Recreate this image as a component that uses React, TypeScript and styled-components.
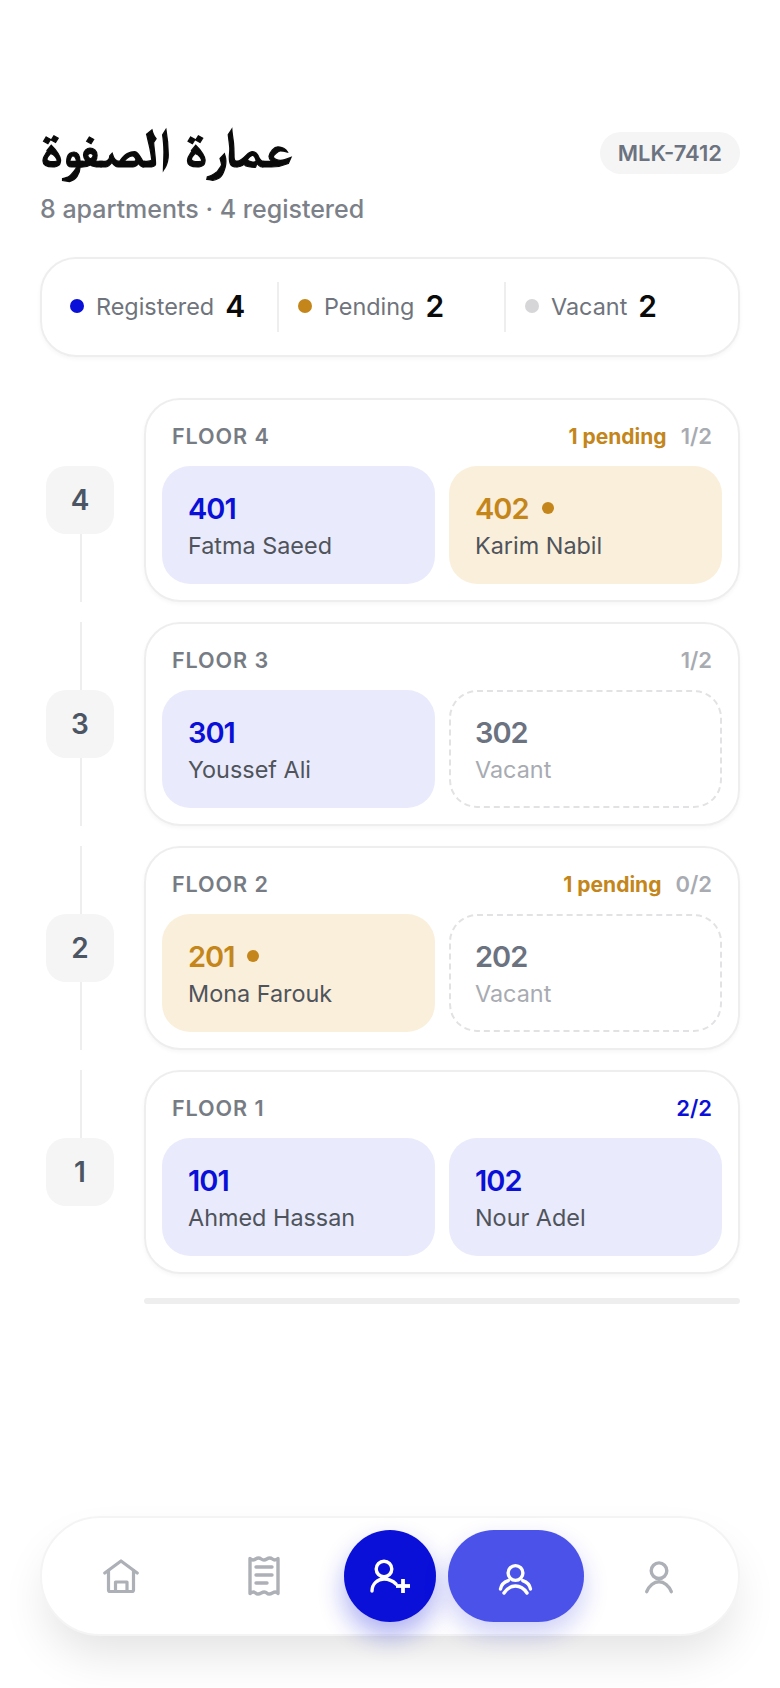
import React from "react";
import styled, { createGlobalStyle } from "styled-components";

const BLUE = "#0a10d8";
const AMBER = "#c4861a";

const GlobalStyle = createGlobalStyle`
	html, body {
		margin: 0;
		padding: 0;
		background: #fff;
		font-family: Inter, "Noto Sans", sans-serif;
	}
`;

const PAGE = styled.div`
	position: relative;
	box-sizing: border-box;
	width: 780px;
	height: 1688px;
	padding: 122px 40px 0;
	overflow: hidden;
`;

const HEADER = styled.div`
	display: flex;
	justify-content: space-between;
	align-items: flex-start;
	height: 72px;
`;

const TITLE = styled.h1`
	margin: 1px 0 0;
	font-family: FreeSerif, "Noto Naskh Arabic", serif;
	font-size: 54px;
	line-height: 56px;
	font-weight: 700;
	color: #0a0a0a;
	-webkit-text-stroke: 1.2px #0a0a0a;
`;

const CHIP = styled.span`
	margin-top: 10px;
	height: 42px;
	padding: 0 18px;
	border-radius: 21px;
	background: #f5f5f6;
	color: #6b7280;
	font-size: 22px;
	font-weight: 600;
	line-height: 42px;
`;

const SUBTITLE = styled.p`
	margin: 0;
	font-size: 25px;
	font-weight: 500;
	line-height: 30px;
	color: #7c8189;
`;

const STATS = styled.div`
	display: grid;
	grid-template-columns: 235px 227px 1fr;
	align-items: center;
	box-sizing: border-box;
	height: 100px;
	margin-top: 33px;
	border: 2px solid #eeeeee;
	border-radius: 36px;
	box-shadow: 0 2px 4px rgba(0, 0, 0, 0.04);
`;

const STAT = styled.div<{ $first?: boolean }>`
	display: flex;
	align-items: center;
	box-sizing: border-box;
	height: 50px;
	padding-bottom: 2px;
	padding-left: ${(props) => (props.$first ? "28px" : "19px")};
	border-left: ${(props) => (props.$first ? "none" : "2px solid #eeeeee")};
`;

const DOT = styled.span<{ $color: string }>`
	width: 14px;
	height: 14px;
	border-radius: 50%;
	background: ${(props) => props.$color};
`;

const STAT_LABEL = styled.span`
	margin-left: 12px;
	font-size: 23.4px;
	color: #6f747c;
`;

const STAT_VALUE = styled.span`
	margin-left: 11px;
	font-size: 30px;
	font-weight: 600;
	line-height: 30px;
	color: #0a0a0a;
`;

const FLOORS = styled.div`
	display: flex;
	flex-direction: column;
	gap: 20px;
	margin-top: 41px;
`;

const ROW = styled.div`
	display: grid;
	grid-template-columns: 80px 1fr;
	column-gap: 24px;
`;

const RAIL = styled.div`
	display: flex;
	flex-direction: column;
	align-items: center;
`;

const LINE = styled.div<{ $hidden?: boolean }>`
	flex: 1;
	width: 2px;
	margin-left: 2px;
	background: ${(props) => (props.$hidden ? "transparent" : "#eeeeee")};
`;

const BADGE = styled.div`
	display: flex;
	align-items: center;
	justify-content: center;
	width: 68px;
	height: 68px;
	border-radius: 20px;
	background: #f5f5f6;
	color: #4b5563;
	font-size: 28px;
	font-weight: 600;
`;

const CARD = styled.div`
	box-sizing: border-box;
	height: 204px;
	padding: 16px;
	border: 2px solid #eeeeee;
	border-radius: 36px;
	box-shadow: 0 2px 4px rgba(0, 0, 0, 0.04);
`;

const CARD_HEAD = styled.div`
	display: flex;
	align-items: center;
	height: 40px;
	padding: 0 10px;
	margin-bottom: 10px;
`;

const FLOOR_NAME = styled.span`
	flex: 1;
	font-size: 21.6px;
	font-weight: 600;
	letter-spacing: 0.9px;
	color: #777c84;
`;

const PENDING = styled.span`
	margin-right: 14px;
	font-size: 21px;
	font-weight: 700;
	color: ${AMBER};
`;

const COUNT = styled.span<{ $full?: boolean }>`
	font-size: 22px;
	font-weight: 600;
	color: ${(props) => (props.$full ? BLUE : "#a8abb2")};
`;

const CELLS = styled.div`
	display: grid;
	grid-template-columns: 1fr 1fr;
	gap: 14px;
`;

type CellState = "registered" | "pending" | "vacant";

const CELL = styled.div<{ $state: CellState }>`
	box-sizing: border-box;
	height: 118px;
	padding: ${(props) => (props.$state === "vacant" ? "20px 24px" : "22px 26px")};
	border-radius: 28px;
	background: ${(props) =>
		props.$state === "registered"
			? "#e9eafb"
			: props.$state === "pending"
				? "#faefdb"
				: "transparent"};
	border: ${(props) => (props.$state === "vacant" ? "2px dashed #e2e2e4" : "none")};
`;

const CELL_NUMBER = styled.div<{ $state: CellState }>`
	display: flex;
	align-items: center;
	gap: 13px;
	height: 40px;
	font-size: 29px;
	font-weight: 600;
	letter-spacing: -1px;
	color: ${(props) =>
		props.$state === "registered"
			? BLUE
			: props.$state === "pending"
				? AMBER
				: "#6b7280"};
`;

const PENDING_DOT = styled.span`
	width: 12px;
	height: 12px;
	border-radius: 50%;
	background: ${AMBER};
`;

const CELL_NAME = styled.div<{ $vacant?: boolean }>`
	margin-top: 4px;
	font-size: 23.4px;
	line-height: 28px;
	color: ${(props) => (props.$vacant ? "#a8abb2" : "#4f545c")};
`;

const SCROLLBAR = styled.div`
	height: 6px;
	margin: 24px 0 0 104px;
	border-radius: 3px;
	background: #eeeeee;
`;

const NAV = styled.nav`
	position: absolute;
	left: 40px;
	top: 1516px;
	display: flex;
	align-items: center;
	gap: 12px;
	box-sizing: border-box;
	width: 700px;
	height: 120px;
	padding: 0 16px;
	border: 2px solid #f4f4f4;
	border-radius: 60px;
	background: #fff;
	box-shadow: 0 24px 48px -8px rgba(0, 0, 0, 0.12);
`;

const NAV_ITEM = styled.div<{ $width: number }>`
	display: flex;
	align-items: center;
	justify-content: center;
	width: ${(props) => props.$width}px;
	height: 92px;
`;

const FAB = styled.div`
	display: flex;
	align-items: center;
	justify-content: center;
	width: 92px;
	height: 92px;
	border-radius: 50%;
	background: ${BLUE};
	box-shadow: 0 14px 26px rgba(10, 16, 216, 0.32);
`;

const ACTIVE = styled.div`
	display: flex;
	align-items: center;
	justify-content: center;
	width: 136px;
	height: 92px;
	border-radius: 46px;
	background: #4b52ea;
	box-shadow: 0 12px 26px rgba(10, 16, 216, 0.2);
`;

const HomeIcon = () => (
	<svg width="36" height="36" viewBox="0 0 36 36" fill="none" stroke="#adb0b6" strokeWidth="3.2" strokeLinecap="round" strokeLinejoin="round">
		<path d="M1.800 15 18 3 34.200 15" />
		<path d="M5.500 12.500V32a1.500 1.500 0 0 0 1.500 1.500h22a1.500 1.500 0 0 0 1.500-1.500V12.500" />
		<path d="M12.500 33.500V24h11.500v9.500" />
	</svg>
);

const ReceiptIcon = () => (
	<svg width="34" height="40" viewBox="0 0 34 40" fill="none" stroke="#adb0b6" strokeWidth="3.4" strokeLinecap="round" strokeLinejoin="round">
		<path d="M3 2.500v35q3.500-2.500 5.600-.5t5.600 0 5.600 0 5.600 0 5.600.5v-35q-3 2.500-5.600.5t-5.600 0-5.600 0-5.600 0-5.600-.5Z" />
		<path d="M9 11h16" />
		<path d="M9 19h16" />
		<path d="M9 27h11" />
	</svg>
);

const AddUserIcon = () => (
	<svg width="40" height="40" viewBox="0 0 40 40" fill="none" stroke="#fff" strokeWidth="3.4" strokeLinecap="round" strokeLinejoin="round">
		<circle cx="14" cy="13" r="7.800" />
		<path d="M2 35c0-7 5.500-12 12-12 5 0 9 2 12 5" />
		<path d="M26 30h14" strokeWidth="3.800" strokeLinecap="butt" />
		<path d="M33 23v14" strokeWidth="3.800" strokeLinecap="butt" />
	</svg>
);

const TenantsIcon = () => (
	<svg width="40" height="40" viewBox="0 0 40 40" fill="none" stroke="#fff" strokeWidth="3.400" strokeLinecap="round" strokeLinejoin="round">
		<circle cx="19.500" cy="17" r="7.400" />
		<path d="M4.500 33c.6-3.800 3.600-7 7.800-8.400" />
		<path d="M34.500 33c-.6-3.800-3.600-7-7.800-8.400" />
		<path d="M8 37c3-4.600 7-7 11.500-7s8.500 2.400 11.500 7" />
	</svg>
);

const ProfileIcon = () => (
	<svg width="36" height="36" viewBox="0 0 36 36" fill="none" stroke="#adb0b6" strokeWidth="3.400" strokeLinecap="round" strokeLinejoin="round">
		<circle cx="18" cy="12.700" r="7.800" />
		<path d="M5.700 33.700C8 28 13 23.700 18 23.700s10 4.300 12.300 10" />
	</svg>
);

type Unit = { number: string; name: string; state: CellState };
type Floor = { level: number; pending?: number; count: string; full?: boolean; units: Unit[] };

const floors: Floor[] = [
	{
		level: 4,
		pending: 1,
		count: "1/2",
		units: [
			{ number: "401", name: "Fatma Saeed", state: "registered" },
			{ number: "402", name: "Karim Nabil", state: "pending" },
		],
	},
	{
		level: 3,
		count: "1/2",
		units: [
			{ number: "301", name: "Youssef Ali", state: "registered" },
			{ number: "302", name: "Vacant", state: "vacant" },
		],
	},
	{
		level: 2,
		pending: 1,
		count: "0/2",
		units: [
			{ number: "201", name: "Mona Farouk", state: "pending" },
			{ number: "202", name: "Vacant", state: "vacant" },
		],
	},
	{
		level: 1,
		count: "2/2",
		full: true,
		units: [
			{ number: "101", name: "Ahmed Hassan", state: "registered" },
			{ number: "102", name: "Nour Adel", state: "registered" },
		],
	},
];

export default function App() {
	return (
		<PAGE>
			<GlobalStyle />
			<HEADER>
				<TITLE>عمارة الصفوة</TITLE>
				<CHIP>MLK-7412</CHIP>
			</HEADER>
			<SUBTITLE>8 apartments · 4 registered</SUBTITLE>
			<STATS>
				<STAT $first>
					<DOT $color={BLUE} />
					<STAT_LABEL>Registered</STAT_LABEL>
					<STAT_VALUE>4</STAT_VALUE>
				</STAT>
				<STAT>
					<DOT $color={AMBER} />
					<STAT_LABEL>Pending</STAT_LABEL>
					<STAT_VALUE>2</STAT_VALUE>
				</STAT>
				<STAT>
					<DOT $color="#d6d6d8" />
					<STAT_LABEL>Vacant</STAT_LABEL>
					<STAT_VALUE>2</STAT_VALUE>
				</STAT>
			</STATS>
			<FLOORS>
				{floors.map((floor) => (
					<ROW key={floor.level}>
						<RAIL>
							<LINE $hidden={floor.level === 4} />
							<BADGE>{floor.level}</BADGE>
							<LINE $hidden={floor.level === 1} />
						</RAIL>
						<CARD>
							<CARD_HEAD>
								<FLOOR_NAME>FLOOR {floor.level}</FLOOR_NAME>
								{floor.pending && <PENDING>{floor.pending} pending</PENDING>}
								<COUNT $full={floor.full}>{floor.count}</COUNT>
							</CARD_HEAD>
							<CELLS>
								{floor.units.map((unit) => (
									<CELL key={unit.number} $state={unit.state}>
										<CELL_NUMBER $state={unit.state}>
											{unit.number}
											{unit.state === "pending" && <PENDING_DOT />}
										</CELL_NUMBER>
										<CELL_NAME $vacant={unit.state === "vacant"}>{unit.name}</CELL_NAME>
									</CELL>
								))}
							</CELLS>
						</CARD>
					</ROW>
				))}
			</FLOORS>
			<SCROLLBAR />
			<NAV>
				<NAV_ITEM $width={126}>
					<HomeIcon />
				</NAV_ITEM>
				<NAV_ITEM $width={136}>
					<ReceiptIcon />
				</NAV_ITEM>
				<FAB>
					<AddUserIcon />
				</FAB>
				<ACTIVE>
					<TenantsIcon />
				</ACTIVE>
				<NAV_ITEM $width={126}>
					<ProfileIcon />
				</NAV_ITEM>
			</NAV>
		</PAGE>
	);
}
